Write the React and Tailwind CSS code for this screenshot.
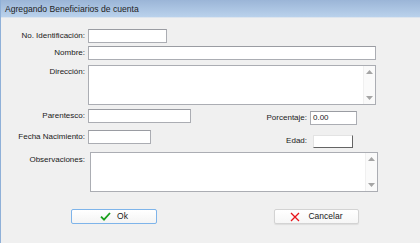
import React from 'react';

const font = { fontFamily: '"Liberation Sans", Arial, sans-serif' };

const Label = ({ children, className = 'w-[84px]' }) => (
  <span className={`${className} shrink-0 text-right text-[8px] leading-[14px] text-[#1a1a1a]`}>{children}</span>
);

const Input = ({ className = '', value = '' }) => (
  <div className={`${className} h-[14px] shrink-0 bg-white border border-[#abadb3] border-t-[#9a9ca2] px-[2px] text-[8px] leading-[12px] text-[#1a1a1a]`}>
    {value}
  </div>
);

const TextArea = ({ className = '' }) => (
  <div className={`${className} h-[40px] shrink-0 bg-white border border-[#abadb3] flex justify-end`}>
    <div className="w-[12px] h-full border-l border-[#f0f0f0] bg-[#fafafa] flex flex-col items-center justify-between py-[4px]">
      <svg width="7" height="4" viewBox="0 0 7 4"><path d="M0 4 L3.5 0 L7 4 Z" fill="#a5a5a5" /></svg>
      <svg width="7" height="4" viewBox="0 0 7 4"><path d="M0 0 L3.5 4 L7 0 Z" fill="#a5a5a5" /></svg>
    </div>
  </div>
);

const BeneficiaryDialog = () => {
  return (
    <div className="w-[420px] h-[243px] bg-[#f0f0f0] border-l border-[#8fb0d8] overflow-hidden" style={font}>
      {/* title bar */}
      <div className="h-[18px] bg-gradient-to-b from-[#9bb5d7] to-[#bad2ec] border-b border-[#dde5ee] pl-[4px] text-[8.6px] leading-[18px] text-[#1e1e1e]">
        Agregando Beneficiarios de cuenta
      </div>

      <div className="flex flex-col">
        <div className="mt-[11px] flex items-center gap-[3px]">
          <Label>No. Identificación:</Label>
          <Input className="w-[79px]" />
        </div>

        <div className="mt-[3px] flex items-center gap-[3px]">
          <Label>Nombre:</Label>
          <Input className="w-[288px]" />
        </div>

        <div className="mt-[5px] flex items-start gap-[3px]">
          <Label>Dirección:</Label>
          <TextArea className="w-[288px]" />
        </div>

        <div className="mt-[4px] flex items-start">
          <Label>Parentesco:</Label>
          <Input className="ml-[3px] w-[103px]" />
          <div className="mt-[2px] flex items-center gap-[3px]">
            <Label className="w-[116px]">Porcentaje:</Label>
            <Input className="w-[47px]" value="0.00" />
          </div>
        </div>

        <div className="mt-[5px] flex items-start">
          <Label>Fecha Nacimiento:</Label>
          <Input className="ml-[3px] w-[63px]" />
          <div className="mt-[4px] flex items-center">
            <Label className="w-[156px]">Edad:</Label>
            <div className="ml-[6px] w-[40px] h-[13px] bg-white border border-[#e3e3e3] border-r-[#646464] border-b-[#646464]" />
          </div>
        </div>

        <div className="mt-[4px] flex items-start gap-[5px]">
          <Label>
            <span className="block pt-[1px]">Observaciones:</span>
          </Label>
          <TextArea className="w-[288px]" />
        </div>

        <div className="mt-[17px] flex">
          <button className="ml-[70px] w-[86px] h-[15px] rounded-[2px] border border-[#7eb4ea] bg-gradient-to-b from-white to-[#f4f4f4] flex items-center justify-center gap-[6px] text-[8.5px] text-[#1a1a1a]">
            <svg width="11" height="9" viewBox="0 0 11 9">
              <path d="M1 4.6 L4 7.6 L10 1" fill="none" stroke="#19a01c" strokeWidth="1.8" />
            </svg>
            <span>Ok</span>
          </button>
          <button className="ml-[117px] w-[85px] h-[15px] rounded-[2px] border border-[#d3d3d3] bg-gradient-to-b from-white to-[#f6f6f6] shadow-[0_1px_1px_rgba(0,0,0,0.08)] flex items-center justify-center gap-[8px] text-[8.5px] text-[#1a1a1a]">
            <svg width="10" height="10" viewBox="0 0 10 10">
              <path d="M1 1 L9 9 M9 1 L1 9" fill="none" stroke="#e8141a" strokeWidth="1.3" />
            </svg>
            <span>Cancelar</span>
          </button>
        </div>
      </div>
    </div>
  );
};

export default function App() {
  return <BeneficiaryDialog />;
}
